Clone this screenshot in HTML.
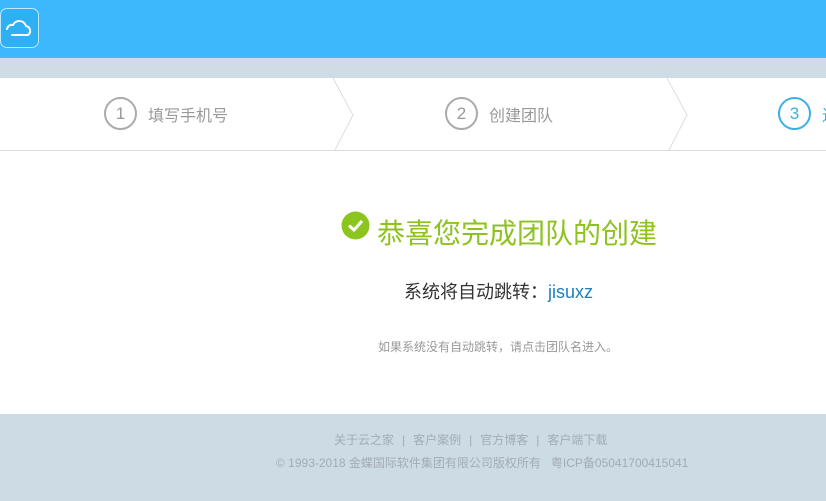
<!DOCTYPE html>
<html><head><meta charset="utf-8"><style>
*{margin:0;padding:0;box-sizing:border-box}
body{width:826px;height:501px;overflow:hidden;background:#fff;font-family:"Liberation Sans","Noto Sans CJK SC",sans-serif;position:relative}
.a{position:absolute;white-space:nowrap}
.circ{position:absolute;width:33px;height:33px;border:2px solid #aaa;border-radius:50%;color:#999;font-size:17px;text-align:center;line-height:29px}
.st{position:absolute;font-size:16px;color:#999;top:102px}
.sep{margin:0 8px}
</style></head><body>
<div class="a" style="left:0;top:0;width:826px;height:58px;background:#3cb9fd"></div>
<div class="a" style="left:0;top:8px;width:39px;height:40px;border:1px solid #bfe8ff;border-radius:7px;background:#2eb0f5"></div>
<svg class="a" style="left:4px;top:17px" width="30" height="22" viewBox="0 0 30 22"><path d="M3 12 A5 5 0 0 1 9 8 A7 7 0 0 1 22 9 A5 5 0 0 1 24 18 H8" fill="none" stroke="#fff" stroke-width="2" stroke-linecap="round"/></svg>
<div class="a" style="left:0;top:58px;width:826px;height:20px;background:#cfdce6"></div>
<div class="a" style="left:0;top:150px;width:826px;height:1px;background:#ddd"></div>
<svg class="a" style="left:0;top:78px" width="826" height="72"><path d="M333 0 L353 37 L335 72 M667 0 L687 37 L669 72" fill="none" stroke="#ddd" stroke-width="1"/></svg>
<div class="circ" style="left:104px;top:97px">1</div><div class="st" style="left:148px">填写手机号</div>
<div class="circ" style="left:445px;top:97px">2</div><div class="st" style="left:489px">创建团队</div>
<div class="circ" style="left:778px;top:97px;border-color:#3bb0e4;color:#3bb0e4">3</div><div class="st" style="left:822px;color:#3bb0e4">进</div>
<svg class="a" style="left:341px;top:211px" width="29" height="29"><circle cx="14.5" cy="14.5" r="14" fill="#8cc51e"/><path d="M8 14.5 L13 19 L21 10" fill="none" stroke="#fff" stroke-width="3"/></svg>
<div class="a" style="left:377px;top:212px;font-size:28px;color:#8dc21f">恭喜您完成团队的创建</div>
<div class="a" style="left:404px;top:278px;font-size:18px;color:#333">系统将自动跳转：<span style="color:#1e7fc0">jisuxz</span></div>
<div class="a" style="left:378px;top:338px;font-size:12px;color:#999">如果系统没有自动跳转，请点击团队名进入。</div>
<div class="a" style="left:0;top:414px;width:826px;height:87px;background:#cddbe5"></div>
<div class="a" style="left:334px;top:431px;font-size:12px;color:#a2acb3">关于云之家<span class="sep">|</span>客户案例<span class="sep">|</span>官方博客<span class="sep">|</span>客户端下载</div>
<div class="a" style="left:276px;top:454px;font-size:12px;color:#a2acb3">© 1993-2018 金蝶国际软件集团有限公司版权所有 &nbsp;&nbsp;粤ICP备05041700415041</div>
</body></html>
